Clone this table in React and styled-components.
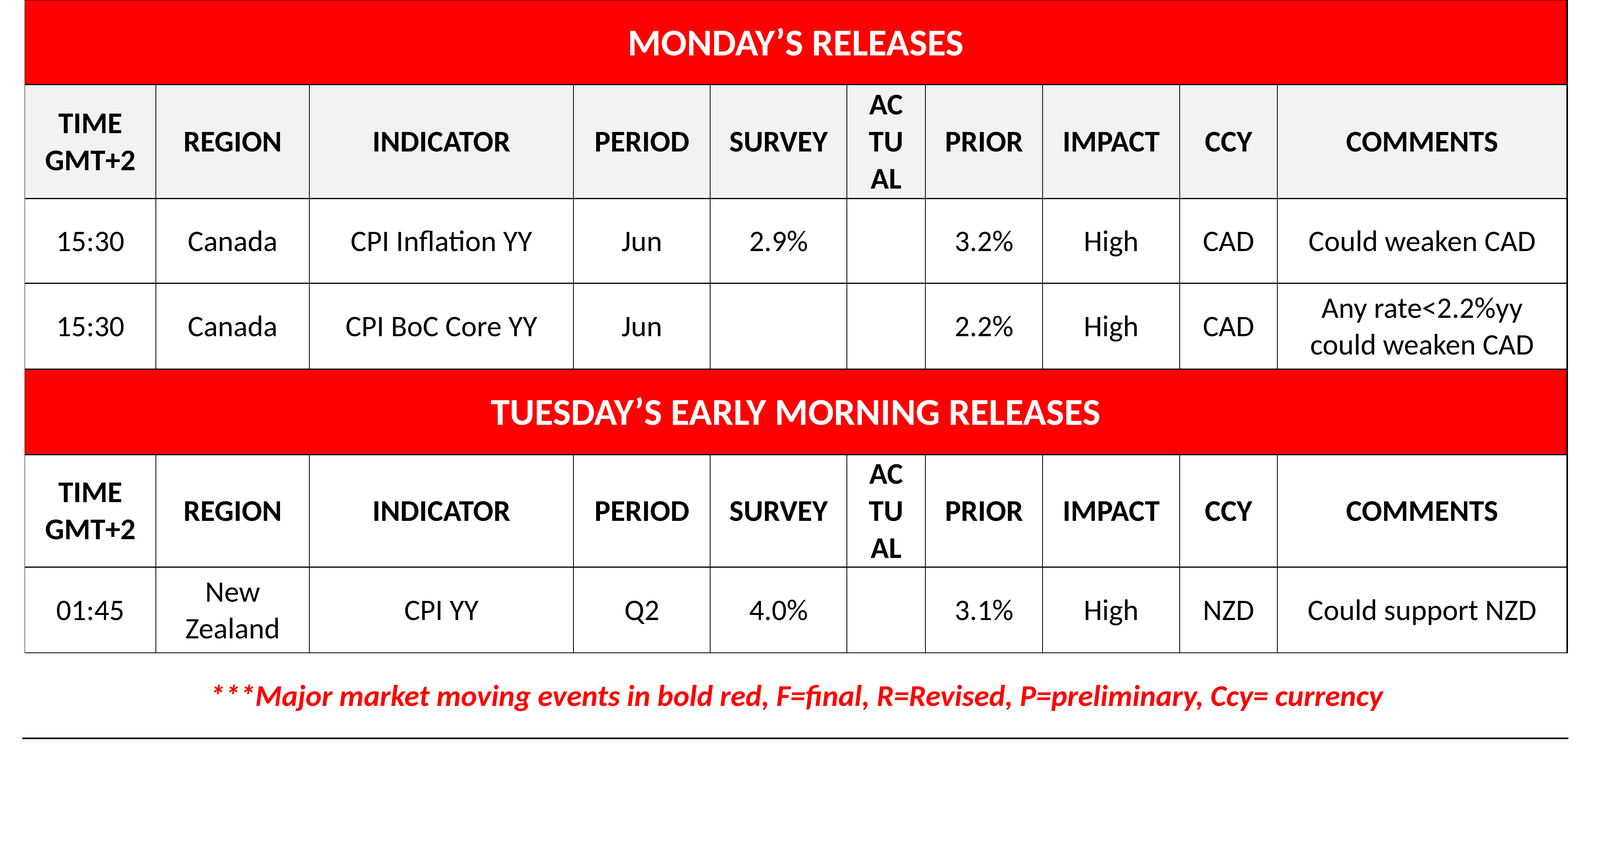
import React from "react";
import styled, { createGlobalStyle } from "styled-components";

// Sizes are given in reference pixels (4361 wide frame) and expressed in vw
// so the sheet always fits the real viewport width.
const v = (n) => `${(n / 43.61).toFixed(4)}vw`;

const GlobalStyle = createGlobalStyle`
  html, body {
    margin: 0;
    padding: 0;
    background: #ffffff;
    overflow-x: hidden;
  }
  body {
    font-family: "Carlito", "Calibri", "Lato", "Liberation Sans", sans-serif;
    color: #000000;
  }
`;

const Page = styled.div`
  width: 100vw;
  box-sizing: border-box;
  padding: 0 0 0 ${v(67)};
  background: #ffffff;
`;

const Column = styled.div`
  width: ${v(4207)};
  display: flex;
  flex-direction: column;
`;

const Sheet = styled.div`
  display: grid;
  grid-template-columns: ${[356, 416, 718, 371, 370, 212, 318, 371, 265, 786].map(v).join(" ")};
  grid-template-rows: ${[228, 308, 228, 231, 230, 304, 231].map(v).join(" ")};
  column-gap: ${v(2)};
  row-gap: ${v(3)};
  background: #000000;
  border: ${v(2)} solid #000000;
  border-bottom-width: ${v(3)};
`;

const Banner = styled.div`
  grid-column: 1 / -1;
  background: #ff0000;
  color: #ffffff;
  font-weight: 700;
  font-size: ${v(104)};
  display: flex;
  align-items: center;
  justify-content: center;
`;

const Cell = styled.div`
  background: ${(p) => (p.$shaded ? "#f2f2f2" : "#ffffff")};
  display: flex;
  align-items: center;
  justify-content: center;
  text-align: center;
  line-height: ${v(101)};
  font-size: ${(p) => (p.$head ? v(82) : v(81))};
  font-weight: ${(p) => (p.$head ? 700 : 400)};
  white-space: nowrap;
`;

const Note = styled.div`
  margin-top: ${v(66)};
  text-align: center;
  color: #ff0000;
  font-weight: 700;
  font-style: italic;
  font-size: ${v(83)};
  line-height: ${v(100)};
`;

const Rule = styled.div`
  margin-top: ${v(64)};
  margin-left: ${v(-6)};
  width: ${v(4214)};
  height: ${v(4)};
  background: #000000;
`;

const headers = [
  <>TIME<br />GMT+2</>,
  "REGION",
  "INDICATOR",
  "PERIOD",
  "SURVEY",
  <>AC<br />TU<br />AL</>,
  "PRIOR",
  "IMPACT",
  "CCY",
  "COMMENTS",
];

const monday = [
  ["15:30", "Canada", "CPI Inflation YY", "Jun", "2.9%", "", "3.2%", "High", "CAD", "Could weaken CAD"],
  ["15:30", "Canada", "CPI BoC Core YY", "Jun", "", "", "2.2%", "High", "CAD", <>Any rate&lt;2.2%yy<br />could weaken CAD</>],
];

const tuesday = [
  ["01:45", <>New<br />Zealand</>, "CPI YY", "Q2", "4.0%", "", "3.1%", "High", "NZD", "Could support NZD"],
];

function HeaderRow({ shaded }) {
  return headers.map((h, i) => (
    <Cell key={"h" + i} $head $shaded={shaded}>
      <span>{h}</span>
    </Cell>
  ));
}

function DataRows({ rows, prefix }) {
  return rows.map((r, ri) =>
    r.map((val, ci) => (
      <Cell key={prefix + ri + "-" + ci}>
        <span>{val}</span>
      </Cell>
    ))
  );
}

export default function App() {
  return (
    <>
      <GlobalStyle />
      <Page>
        <Column>
          <Sheet>
            <Banner>MONDAY’S RELEASES</Banner>
            <HeaderRow shaded />
            <DataRows rows={monday} prefix="m" />
            <Banner>TUESDAY’S EARLY MORNING RELEASES</Banner>
            <HeaderRow />
            <DataRows rows={tuesday} prefix="t" />
          </Sheet>
          <Note>
            ***Major market moving events in bold red, F=final, R=Revised, P=preliminary, Ccy= currency
          </Note>
          <Rule />
        </Column>
      </Page>
    </>
  );
}
